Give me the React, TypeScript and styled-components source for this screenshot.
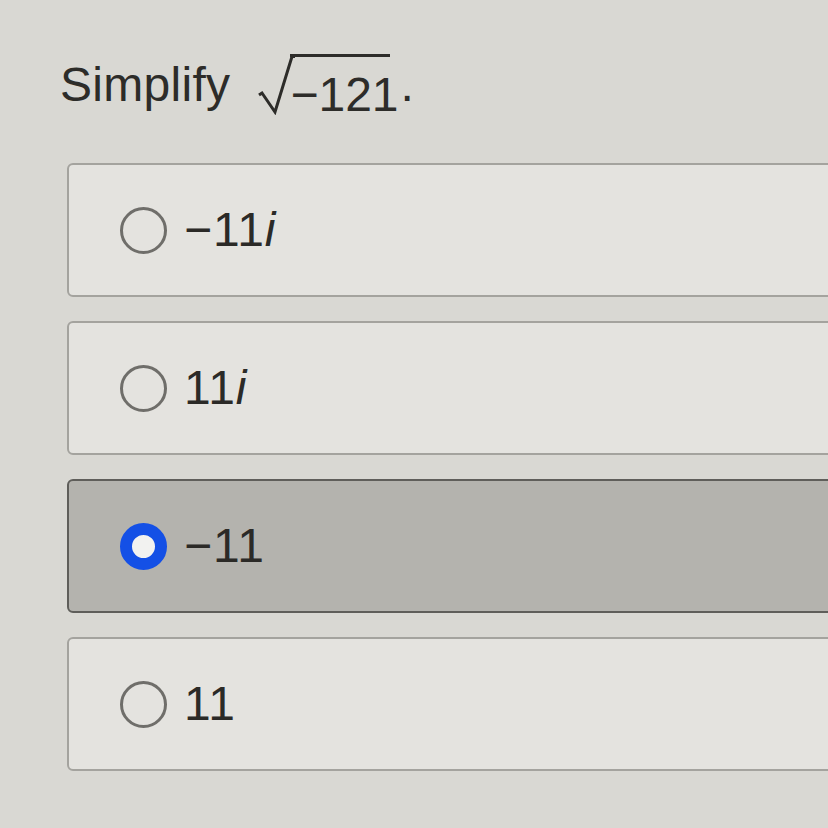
import React from "react";
import styled, { createGlobalStyle } from "styled-components";

const Global = createGlobalStyle`
  html, body {
    margin: 0;
    padding: 0;
    background: #d9d8d3;
    overflow: hidden;
  }
  body {
    font-family: "Liberation Sans", Arial, Helvetica, sans-serif;
    color: #2b2a27;
  }
`;

const Page = styled.div`
  width: 828px;
  height: 828px;
  box-sizing: border-box;
  padding: 53px 0 0 60px;
  overflow: hidden;
`;

const Title = styled.div`
  display: flex;
  align-items: flex-start;
  height: 66px;
  font-size: 48px;
  line-height: 48px;
  color: #2d2c29;
`;

const Word = styled.span`
  margin-top: 8px;
  letter-spacing: 0.3px;
`;

const Radical = styled.span`
  display: flex;
  align-items: flex-start;
  margin-left: 28px;
`;

const RadicalSign = styled.svg`
  display: block;
  flex: none;
  margin-right: -5px;
`;

const Radicand = styled.span`
  margin-top: 1px;
  padding-top: 17px;
  white-space: nowrap;
  background: linear-gradient(#2d2c29, #2d2c29) no-repeat left top / calc(100% - 9px) 3px;
`;

const Period = styled.span`
  margin-top: 8px;
  margin-left: 2px;
`;

const Options = styled.div`
  display: flex;
  flex-direction: column;
  gap: 24px;
  margin: 44px -60px 0 7px;
`;

const Option = styled.div<{ $selected?: boolean }>`
  display: flex;
  align-items: center;
  gap: 17px;
  height: 134px;
  box-sizing: border-box;
  padding-left: 51px;
  border: 2px solid ${(p) => (p.$selected ? "#5f5e5a" : "#a4a39e")};
  border-radius: 6px;
  background: ${(p) => (p.$selected ? "#b4b3ae" : "#e4e3df")};
`;

const Radio = styled.span<{ $selected?: boolean }>`
  flex: none;
  width: 47px;
  height: 47px;
  box-sizing: border-box;
  border-radius: 50%;
  border: ${(p) => (p.$selected ? "12px solid #1450e6" : "3px solid #6f6e6a")};
  background: ${(p) => (p.$selected ? "#f2f2f0" : "transparent")};
`;

const Label = styled.span`
  font-size: 48px;
  line-height: 48px;
  letter-spacing: 1px;
  color: #2b2a27;
  white-space: nowrap;
`;

const Var = styled.i`
  font-style: italic;
`;

const options: { key: string; content: React.ReactNode; selected?: boolean }[] = [
  { key: "a", content: <>−11<Var>i</Var></> },
  { key: "b", content: <>11<Var>i</Var></> },
  { key: "c", content: <>−11</>, selected: true },
  { key: "d", content: <>11</> },
];

export default function App() {
  return (
    <Page>
      <Global />
      <Title>
        <Word>Simplify</Word>
        <Radical>
          <RadicalSign width="37" height="62" viewBox="0 0 37 62">
            <path
              d="M1 42 L4 40 L17 59 L34 3.5 L37 3.5"
              fill="none"
              stroke="#2d2c29"
              strokeWidth="3"
              strokeLinejoin="miter"
            />
          </RadicalSign>
          <Radicand>−121</Radicand>
        </Radical>
        <Period>.</Period>
      </Title>
      <Options>
        {options.map((o) => (
          <Option key={o.key} $selected={o.selected}>
            <Radio $selected={o.selected} />
            <Label>{o.content}</Label>
          </Option>
        ))}
      </Options>
    </Page>
  );
}
